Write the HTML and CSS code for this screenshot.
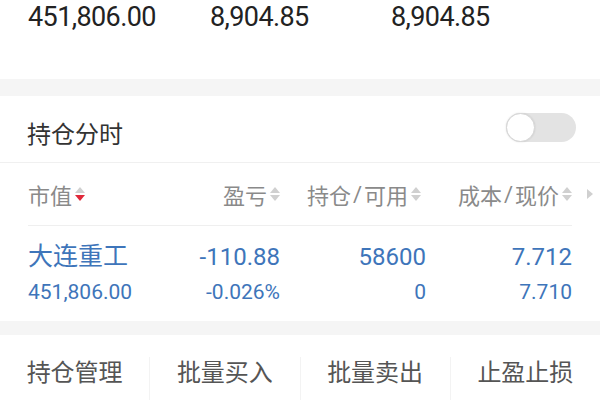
FILE: index.html
```html
<!DOCTYPE html>
<html lang="zh-CN">
<head>
    <meta charset="UTF-8">
    <meta name="viewport" content="width=device-width, initial-scale=1.0">
    <title>持仓</title>
    <link rel="stylesheet" href="styles.css">
</head>
<body>
    <div class="summary">
        <span>451,806.00</span>
        <span>8,904.85</span>
        <span>8,904.85</span>
    </div>
    <div class="gap"></div>

    <div class="title-row">
        <span class="title">持仓分时</span>
        <span class="switch"><span class="knob"></span></span>
    </div>

    <div class="table-head">
        <div class="th th-left">市值<span class="sort active"><i class="up"></i><i class="down"></i></span></div>
        <div class="th">盈亏<span class="sort"><i class="up"></i><i class="down"></i></span></div>
        <div class="th pad">持仓<span class="slash">/</span>可用<span class="sort"><i class="up"></i><i class="down"></i></span></div>
        <div class="th pad">成本<span class="slash">/</span>现价<span class="sort"><i class="up"></i><i class="down"></i></span><span class="more"></span></div>
    </div>

    <div class="position">
        <div class="cell cell-left">
            <span class="name">大连重工</span>
            <span class="sub">451,806.00</span>
        </div>
        <div class="cell">
            <span class="main">-110.88</span>
            <span class="sub">-0.026%</span>
        </div>
        <div class="cell">
            <span class="main">58600</span>
            <span class="sub">0</span>
        </div>
        <div class="cell">
            <span class="main">7.712</span>
            <span class="sub">7.710</span>
        </div>
    </div>
    <div class="gap gap-small"></div>

    <div class="actions">
        <div class="action">持仓管理</div>
        <div class="action">批量买入</div>
        <div class="action">批量卖出</div>
        <div class="action">止盈止损</div>
    </div>
</body>
</html>
```

FILE: styles.css
```css
body {
    margin: 0;
    background-color: #fff;
    font-family: Roboto, "Noto Sans CJK SC", sans-serif;
    color: #333;
}
.summary {
    display: grid;
    grid-template-columns: 182px 181px 1fr;
    height: 79px;
    padding-left: 28px;
    font-size: 27px;
    line-height: 34px;
    letter-spacing: -0.6px;
    color: #222;
}
.gap {
    height: 17px;
    background-color: #f5f5f5;
}
.gap-small {
    height: 14px;
}
.title-row {
    display: flex;
    align-items: center;
    justify-content: space-between;
    height: 66px;
    padding: 0 24px 0 27px;
    border-bottom: 1px solid #f0f0f0;
}
.title {
    font-size: 24px;
    color: #333;
    margin-top: 6px;
}
.switch {
    display: flex;
    width: 70px;
    height: 29px;
    border-radius: 15px;
    background-color: #e3e3e3;
    margin-top: -4px;
}
.knob {
    width: 27px;
    height: 27px;
    border-radius: 50%;
    background-color: #fff;
    border: 1px solid #d6d6d6;
    box-shadow: 0 0 2px rgba(0, 0, 0, 0.12);
}
.table-head {
    display: grid;
    grid-template-columns: 120px 132px 146px 146px;
    height: 62px;
    margin: 0 28px;
    border-bottom: 1px solid #efefef;
    font-size: 22px;
    color: #8a8a8a;
}
.th {
    display: flex;
    align-items: center;
    justify-content: flex-end;
}
.th-left {
    justify-content: flex-start;
}
.pad {
    padding-right: 5px;
}
.slash {
    margin: 0 2px;
}
.sort {
    display: flex;
    flex-direction: column;
    gap: 2px;
    margin-left: 3px;
}
.sort i {
    width: 0;
    height: 0;
    border-left: 5px solid transparent;
    border-right: 5px solid transparent;
}
.sort .up {
    border-bottom: 6px solid #d0d0d0;
}
.sort .down {
    border-top: 6px solid #d0d0d0;
}
.sort.active .down {
    border-top-color: #e0283a;
}
.more {
    width: 0;
    height: 0;
    border-top: 5px solid transparent;
    border-bottom: 5px solid transparent;
    border-left: 6px solid #d0d0d0;
    margin-left: 15px;
    margin-right: -26px;
}
.position {
    display: grid;
    grid-template-columns: 120px 132px 146px 146px;
    padding: 14px 28px 11px;
    color: #3e75ba;
}
.cell {
    display: flex;
    flex-direction: column;
    align-items: flex-end;
}
.cell-left {
    align-items: flex-start;
}
.name {
    font-size: 25px;
    line-height: 34px;
    white-space: nowrap;
}
.main {
    font-size: 24px;
    line-height: 34px;
}
.sub {
    font-size: 21px;
    line-height: 36px;
}
.actions {
    display: flex;
    padding-top: 22px;
    height: 54px;
}
.action {
    flex: 1;
    text-align: center;
    font-size: 24px;
    line-height: 32px;
    color: #555;
    border-left: 1px solid #f3f3f3;
}
.action:first-child {
    border-left: none;
}
```
